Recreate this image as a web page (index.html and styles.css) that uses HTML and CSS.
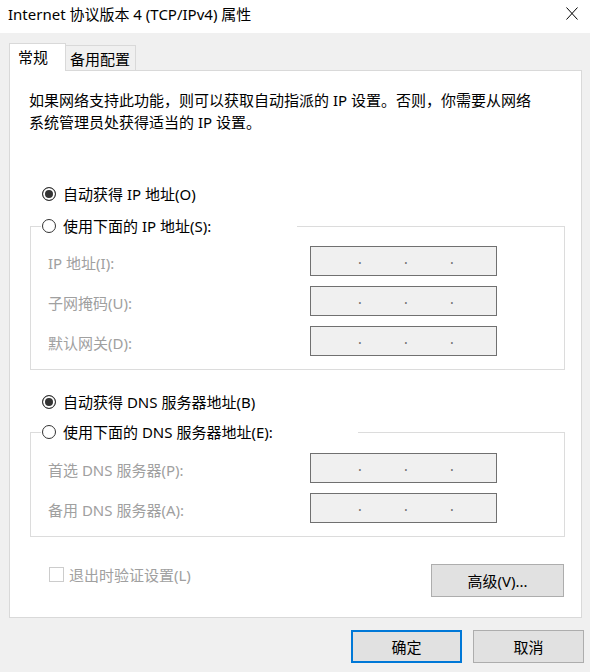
FILE: index.html
```html
<!DOCTYPE html>
<html lang="zh-CN">
<head>
<meta charset="utf-8">
<title>Internet 协议版本 4 (TCP/IPv4) 属性</title>
<link rel="stylesheet" href="styles.css">
</head>
<body>
<div class="window">
  <div class="titlebar">
    <span class="title">Internet 协议版本 4 (TCP/IPv4) 属性</span>
    <span class="close" aria-label="关闭">
      <svg width="12" height="13" viewBox="0 0 12 13"><path d="M0.5 0.5 L11.5 12.5 M11.5 0.5 L0.5 12.5" stroke="#000" stroke-width="1" fill="none"/></svg>
    </span>
  </div>

  <div class="tabs">
    <div class="tab tab-active">常规</div>
    <div class="tab">备用配置</div>
  </div>

  <div class="panel">
    <p class="intro">如果网络支持此功能，则可以获取自动指派的 IP 设置。否则，你需要从网络<br>系统管理员处获得适当的 IP 设置。</p>

    <div class="radio-row radio-first"><span class="radio checked"></span><span>自动获得 IP 地址(O)</span></div>

    <div class="group group-ip">
      <div class="legend legend-ip"><span class="radio"></span><span>使用下面的 IP 地址(S):</span></div>
      <div class="fields">
        <div class="field"><span class="label">IP 地址(I):</span><div class="ipbox"><span class="dot">.</span><span class="dot">.</span><span class="dot">.</span></div></div>
        <div class="field"><span class="label">子网掩码(U):</span><div class="ipbox"><span class="dot">.</span><span class="dot">.</span><span class="dot">.</span></div></div>
        <div class="field"><span class="label">默认网关(D):</span><div class="ipbox"><span class="dot">.</span><span class="dot">.</span><span class="dot">.</span></div></div>
      </div>
    </div>

    <div class="radio-row radio-dns"><span class="radio checked"></span><span>自动获得 DNS 服务器地址(B)</span></div>

    <div class="group group-dns">
      <div class="legend legend-dns"><span class="radio"></span><span>使用下面的 DNS 服务器地址(E):</span></div>
      <div class="fields fields-dns">
        <div class="field"><span class="label">首选 DNS 服务器(P):</span><div class="ipbox"><span class="dot">.</span><span class="dot">.</span><span class="dot">.</span></div></div>
        <div class="field"><span class="label">备用 DNS 服务器(A):</span><div class="ipbox"><span class="dot">.</span><span class="dot">.</span><span class="dot">.</span></div></div>
      </div>
    </div>

    <div class="bottom-row">
      <div class="check"><span class="checkbox"></span><span>退出时验证设置(L)</span></div>
      <button class="btn btn-adv">高级(V)...</button>
    </div>
  </div>

  <div class="footer">
    <button class="btn btn-ok">确定</button>
    <button class="btn">取消</button>
  </div>
</div>
</body>
</html>
```

FILE: styles.css
```css
html, body {
  margin: 0;
  padding: 0;
}
body {
  background: #f0f0f0;
  font-family: "Noto Sans", "Noto Sans CJK SC", sans-serif;
  font-size: 15px;
  color: #000;
  width: 590px;
  height: 672px;
  overflow: hidden;
}
.window {
  width: 590px;
  height: 672px;
}

/* title bar */
.titlebar {
  height: 33px;
  background: #fff;
  display: flex;
  align-items: flex-start;
}
.title {
  margin-left: 8px;
  line-height: 28px;
}
.close {
  margin-left: auto;
  margin-right: 12px;
  margin-top: 7px;
  width: 12px;
  height: 13px;
  display: block;
}
.close svg { display: block; }

/* tabs */
.tabs {
  display: flex;
  align-items: flex-end;
  height: 28px;
  margin-top: 10px;
  padding-left: 9px;
}
.tab {
  box-sizing: border-box;
  line-height: 20px;
  padding-top: 3px;
  white-space: nowrap;
}
.tab-active {
  width: 57px;
  height: 28px;
  padding-left: 8px;
  background: #fff;
  border: 1px solid #d9d9d9;
  border-bottom: none;
  position: relative;
  z-index: 1;
}
.tab:not(.tab-active) {
  width: 70px;
  height: 26px;
  padding-left: 4px;
  background: #f0f0f0;
  border: 1px solid #d9d9d9;
  border-left: none;
}

/* panel */
.panel {
  box-sizing: border-box;
  margin: -1px 9px 0 9px;
  width: 573px;
  background: #fff;
  border: 1px solid #d9d9d9;
  padding: 18px 16px 20px 19px;
}
.intro {
  margin: 0;
  line-height: 22px;
  white-space: nowrap;
}

.radio-row {
  display: flex;
  align-items: center;
  gap: 7px;
  height: 22px;
  line-height: 22px;
  margin-left: 13px;
  white-space: nowrap;
}
.radio-first { margin-top: 50px; }
.radio-dns { margin-top: 21px; }

.radio {
  box-sizing: border-box;
  width: 14px;
  height: 14px;
  border: 1px solid #333;
  border-radius: 50%;
  background: #fff;
  flex: none;
}
.radio.checked {
  background: #333;
  box-shadow: inset 0 0 0 2px #fff;
}

.group {
  margin-left: 1px;
  border: 1px solid #dcdcdc;
  padding: 0 0 13px 17px;
}
.group-ip { margin-top: 21px; }
.group-dns { margin-top: 19px; }

.legend {
  box-sizing: border-box;
  display: flex;
  align-items: center;
  gap: 7px;
  height: 22px;
  line-height: 22px;
  margin-top: -12px;
  margin-left: -7px;
  padding-left: 1px;
  background: #fff;
  white-space: nowrap;
}
.legend-ip { width: 256px; }
.legend-dns { width: 317px; }

.fields {
  display: flex;
  flex-direction: column;
  gap: 10px;
  margin-top: 9px;
}
.fields-dns { margin-top: 10px; }

.field {
  display: flex;
  align-items: center;
  height: 30px;
}
.label {
  width: 262px;
  color: #a0a0a0;
  line-height: 22px;
  padding-top: 3px;
  white-space: nowrap;
}
.ipbox {
  box-sizing: border-box;
  width: 187px;
  height: 30px;
  border: 1px solid #707070;
  background: #f0f0f0;
  display: grid;
  grid-template-columns: 44px 10px 36px 10px 36px 10px;
  column-gap: 0;
  line-height: 24px;
  color: #6d6d6d;
}
.ipbox .dot:nth-child(1) { grid-column: 2; }
.ipbox .dot:nth-child(2) { grid-column: 4; }
.ipbox .dot:nth-child(3) { grid-column: 6; }
.dot {
  text-align: center;
  font-size: 14px;
}

.bottom-row {
  display: flex;
  align-items: flex-start;
  margin-top: 27px;
}
.check {
  display: flex;
  align-items: center;
  gap: 5px;
  height: 22px;
  line-height: 22px;
  margin-left: 20px;
  color: #a0a0a0;
  white-space: nowrap;
}
.checkbox {
  box-sizing: border-box;
  width: 15px;
  height: 15px;
  border: 1px solid #cccccc;
  background: #fff;
  margin-top: -2px;
}

.btn {
  box-sizing: border-box;
  font-family: inherit;
  font-size: 15px;
  color: #000;
  background: #e1e1e1;
  border: 1px solid #adadad;
  padding: 0;
  height: 33px;
  line-height: 20px;
  cursor: default;
}
.btn-adv {
  margin-left: auto;
  margin-right: 1px;
  width: 133px;
}

.footer {
  display: flex;
  justify-content: flex-end;
  gap: 11px;
  padding: 12px 6px 0 0;
}
.footer .btn {
  width: 111px;
}
.btn-ok {
  border: 2px solid #0078d7;
}
```
